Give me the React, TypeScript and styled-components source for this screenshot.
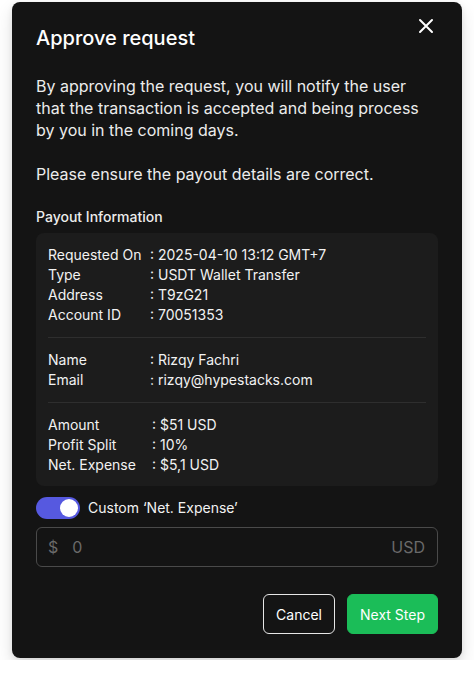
import React, { useState } from 'react';
import styled, { createGlobalStyle } from 'styled-components';

const GlobalStyle = createGlobalStyle`
  * { box-sizing: border-box; }
  body {
    margin: 0;
    background: #ffffff;
    font-family: Inter, "Noto Sans", "Liberation Sans", sans-serif;
  }
`;

const Page = styled.div`
  padding: 2px 12px;
`;

const Modal = styled.div`
  position: relative;
  width: 450px;
  height: 656px;
  background: #141414;
  border-radius: 8px;
  padding: 24px 24px 24px;
  color: #f4f4f4;
  box-shadow: 0 8px 18px rgba(0, 0, 0, 0.12), 0 2px 6px rgba(0, 0, 0, 0.08);
  display: flex;
  flex-direction: column;
`;

const CloseButton = styled.button`
  position: absolute;
  top: 14px;
  right: 26px;
  width: 20px;
  height: 20px;
  padding: 0;
  border: none;
  background: none;
  color: #ffffff;
  cursor: pointer;
  display: flex;
  align-items: center;
  justify-content: center;
`;

const Title = styled.h2`
  margin: 0;
  font-size: 20px;
  line-height: 24px;
  font-weight: 500;
  color: #ffffff;
`;

const Body = styled.p`
  margin: 25px 0 0;
  font-size: 16px;
  line-height: 22px;
  color: #ececec;
`;

const SectionLabel = styled.div`
  margin-top: 22px;
  font-size: 14px;
  line-height: 20px;
  font-weight: 500;
  color: #ececec;
`;

const Card = styled.div`
  margin-top: 6px;
  background: #1c1c1c;
  border-radius: 8px;
  padding: 12px 12px 11px;
`;

const Group = styled.div<{ $labelWidth: number }>`
  display: grid;
  grid-template-columns: ${p => p.$labelWidth}px 1fr;
  font-size: 14px;
  line-height: 20px;
  color: #f2f2f2;
`;

const Divider = styled.hr`
  margin: 12px 0;
  border: none;
  border-top: 1px solid #2e2e2e;
`;

const ToggleRow = styled.label`
  margin-top: 11px;
  display: flex;
  align-items: center;
  gap: 8px;
  font-size: 14px;
  line-height: 20px;
  color: #f2f2f2;
  cursor: pointer;
`;

const Switch = styled.span<{ $on: boolean }>`
  position: relative;
  width: 44px;
  height: 22px;
  border-radius: 11px;
  background: ${p => (p.$on ? '#5659e0' : '#444')};
  flex-shrink: 0;

  &::after {
    content: '';
    position: absolute;
    top: 2px;
    left: ${p => (p.$on ? '24px' : '2px')};
    width: 18px;
    height: 18px;
    border-radius: 50%;
    background: #ffffff;
  }
`;

const InputBox = styled.div`
  margin-top: 8px;
  height: 43px;
  border: 1px solid #4a4a4a;
  border-radius: 6px;
  display: flex;
  align-items: center;
  padding: 0 12px 0 11px;
  gap: 12px;
  font-size: 16px;
  color: #6a6a6a;
`;

const AmountInput = styled.input`
  flex: 1;
  border: none;
  outline: none;
  background: transparent;
  font-family: inherit;
  font-size: 16px;
  color: #e0e0e0;

  &::placeholder {
    color: #6a6a6a;
  }
`;

const Actions = styled.div`
  margin-top: 27px;
  display: flex;
  justify-content: flex-end;
  gap: 12px;
`;

const Button = styled.button<{ $primary?: boolean }>`
  height: 40px;
  padding: 0 12px;
  border-radius: 6px;
  font-family: inherit;
  font-size: 14px;
  cursor: pointer;
  color: #ffffff;
  border: 1px solid ${p => (p.$primary ? '#1bbd58' : '#e6e6e6')};
  background: ${p => (p.$primary ? '#1bbd58' : 'transparent')};
`;

const groups: { width: number; rows: [string, string][] }[] = [
  {
    width: 102,
    rows: [
      ['Requested On', ': 2025-04-10 13:12 GMT+7'],
      ['Type', ': USDT Wallet Transfer'],
      ['Address', ': T9zG21'],
      ['Account ID', ': 70051353'],
    ],
  },
  {
    width: 102,
    rows: [
      ['Name', ': Rizqy Fachri'],
      ['Email', ': rizqy@hypestacks.com'],
    ],
  },
  {
    width: 104,
    rows: [
      ['Amount', ': $51 USD'],
      ['Profit Split', ': 10%'],
      ['Net. Expense', ': $5,1 USD'],
    ],
  },
];

export default function App() {
  const [custom, setCustom] = useState(true);
  const [value, setValue] = useState('');

  return (
    <>
      <GlobalStyle />
      <Page>
        <Modal>
          <CloseButton aria-label="Close">
            <svg width="16" height="16" viewBox="0 0 16 16" fill="none">
              <path d="M2 2L14 14M14 2L2 14" stroke="currentColor" strokeWidth="2" strokeLinecap="round" />
            </svg>
          </CloseButton>
          <Title>Approve request</Title>
          <Body>
            By approving the request, you will notify the user that the transaction is accepted and being process
            by you in the coming days.
            <br />
            <br />
            Please ensure the payout details are correct.
          </Body>
          <SectionLabel>Payout Information</SectionLabel>
          <Card>
            {groups.map((g, i) => (
              <React.Fragment key={i}>
                {i > 0 && <Divider />}
                <Group $labelWidth={g.width}>
                  {g.rows.map(([label, val]) => (
                    <React.Fragment key={label}>
                      <span>{label}</span>
                      <span>{val}</span>
                    </React.Fragment>
                  ))}
                </Group>
              </React.Fragment>
            ))}
          </Card>
          <ToggleRow onClick={() => setCustom(!custom)}>
            <Switch $on={custom} />
            Custom ‘Net. Expense’
          </ToggleRow>
          <InputBox>
            <span>$</span>
            <AmountInput placeholder="0" value={value} onChange={e => setValue(e.target.value)} disabled={!custom} />
            <span>USD</span>
          </InputBox>
          <Actions>
            <Button>Cancel</Button>
            <Button $primary>Next Step</Button>
          </Actions>
        </Modal>
      </Page>
    </>
  );
}
